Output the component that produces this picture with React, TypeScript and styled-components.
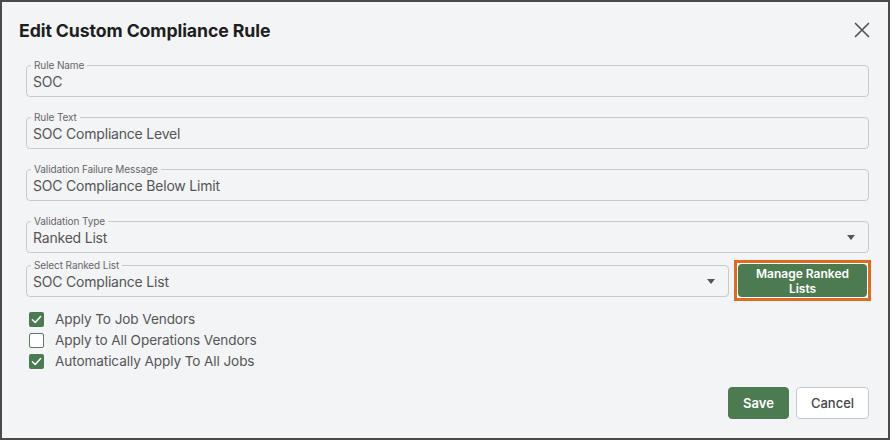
import React from 'react';
import styled, { createGlobalStyle } from 'styled-components';

const GlobalStyle = createGlobalStyle`
  html, body {
    margin: 0;
    padding: 0;
    background: #f3f4f6;
  }
  * {
    box-sizing: border-box;
  }
`;

const green = '#4c7a51';

const Dialog = styled.div`
  width: 890px;
  height: 440px;
  border: 2px solid #4a4a4a;
  background: #f3f4f6;
  font-family: Inter, 'Noto Sans', sans-serif;
  display: flex;
  flex-direction: column;
`;

const Header = styled.div`
  display: flex;
  align-items: center;
  justify-content: space-between;
  height: 54px;
  padding: 2px 16px 0 17px;
`;

const Title = styled.h2`
  margin: 0;
  font-size: 17.7px;
  font-weight: 700;
  color: #1e1e1e;
  letter-spacing: -0.1px;
`;

const CloseButton = styled.button`
  border: none;
  background: none;
  padding: 0;
  width: 20px;
  height: 20px;
  display: flex;
  align-items: center;
  justify-content: center;
  cursor: pointer;
  color: #555;
`;

const Body = styled.div`
  display: flex;
  flex-direction: column;
  padding: 9px 19px 0 24px;
`;

const Row = styled.div<{ $gap?: number }>`
  display: flex;
  align-items: center;
  gap: 5px;
  margin-top: ${(p) => p.$gap ?? 0}px;
`;

const Field = styled.div<{ $gap?: number; $grow?: boolean }>`
  position: relative;
  flex: ${(p) => (p.$grow ? '1 1 auto' : '0 0 auto')};
  height: 32px;
  border: 1px solid #c8c9cb;
  border-radius: 4px;
  margin-top: ${(p) => p.$gap ?? 0}px;
  display: flex;
  align-items: flex-end;
  padding: 0 6px 5px 6px;
`;

const Legend = styled.span`
  position: absolute;
  top: -7px;
  left: 4px;
  padding: 0 3px;
  background: #f3f4f6;
  font-size: 10px;
  line-height: 12px;
  color: #666;
  letter-spacing: -0.1px;
`;

const Value = styled.span`
  flex: 1;
  font-size: 14px;
  line-height: 18px;
  color: #555;
  letter-spacing: -0.2px;
`;

const Caret = styled.span`
  width: 0;
  height: 0;
  border-left: 4.5px solid transparent;
  border-right: 4.5px solid transparent;
  border-top: 5px solid #555;
  margin: 0 7px 7px 0;
`;

const FocusRing = styled.span`
  display: flex;
  border: 3px solid #e06a1f;
  padding: 1px;
  background: #fff;
  margin-right: -2px;
`;

const ManageButton = styled.button`
  width: 129px;
  height: 33px;
  border: none;
  border-radius: 4px;
  background: ${green};
  color: #fff;
  font-family: inherit;
  font-size: 12px;
  font-weight: 600;
  line-height: 15px;
  padding: 1px 12px 0;
  cursor: pointer;
`;

const Checks = styled.div`
  display: flex;
  flex-direction: column;
  gap: 6px;
  margin-top: 11px;
  padding-left: 3px;
`;

const CheckRow = styled.label`
  display: flex;
  align-items: center;
  gap: 11px;
  font-size: 13.6px;
  line-height: 15px;
  color: #555;
  letter-spacing: -0.1px;
`;

const Box = styled.span<{ $on: boolean }>`
  width: 15px;
  height: 15px;
  border-radius: 2px;
  background: ${(p) => (p.$on ? green : '#fff')};
  border: ${(p) => (p.$on ? 'none' : `1.5px solid #5d7a60`)};
  display: flex;
  align-items: center;
  justify-content: center;
`;

const Footer = styled.div`
  display: flex;
  justify-content: flex-end;
  gap: 7px;
  margin-top: 18px;
`;

const Button = styled.button<{ $primary?: boolean }>`
  height: 32px;
  width: ${(p) => (p.$primary ? 61 : 73)}px;
  padding: 0;
  border-radius: 4px;
  border: 1px solid ${(p) => (p.$primary ? green : '#c8c9cb')};
  background: ${(p) => (p.$primary ? green : '#fff')};
  color: ${(p) => (p.$primary ? '#fff' : '#444')};
  font-family: inherit;
  font-size: 13px;
  font-weight: ${(p) => (p.$primary ? 600 : 500)};
  cursor: pointer;
`;

const Check = () => (
  <svg width="11" height="11" viewBox="0 0 12 12" fill="none">
    <path d="M1.5 6.3 4.6 9.2 10.5 2.8" stroke="#fff" strokeWidth="1.6" strokeLinecap="round" strokeLinejoin="round" />
  </svg>
);

const fields = [
  { label: 'Rule Name', value: 'SOC' },
  { label: 'Rule Text', value: 'SOC Compliance Level' },
  { label: 'Validation Failure Message', value: 'SOC Compliance Below Limit' }
];

const options = [
  { label: 'Apply To Job Vendors', on: true },
  { label: 'Apply to All Operations Vendors', on: false },
  { label: 'Automatically Apply To All Jobs', on: true }
];

const App = () => {
  return (
    <>
      <GlobalStyle />
      <Dialog>
        <Header>
          <Title>Edit Custom Compliance Rule</Title>
          <CloseButton aria-label="Close">
            <svg width="16" height="16" viewBox="0 0 16 16" fill="none">
              <path d="M1.5 1.5 14.5 14.5M14.5 1.5 1.5 14.5" stroke="#555" strokeWidth="1.7" strokeLinecap="round" />
            </svg>
          </CloseButton>
        </Header>
        <Body>
          {fields.map((f, i) => (
            <Field key={f.label} $gap={i === 0 ? 0 : 20}>
              <Legend>{f.label}</Legend>
              <Value>{f.value}</Value>
            </Field>
          ))}
          <Field $gap={20}>
            <Legend>Validation Type</Legend>
            <Value>Ranked List</Value>
            <Caret />
          </Field>
          <Row $gap={7}>
            <Field $grow>
              <Legend>Select Ranked List</Legend>
              <Value>SOC Compliance List</Value>
              <Caret />
            </Field>
            <FocusRing>
              <ManageButton>Manage Ranked Lists</ManageButton>
            </FocusRing>
          </Row>
          <Checks>
            {options.map((o) => (
              <CheckRow key={o.label}>
                <Box $on={o.on}>{o.on && <Check />}</Box>
                {o.label}
              </CheckRow>
            ))}
          </Checks>
          <Footer>
            <Button $primary>Save</Button>
            <Button>Cancel</Button>
          </Footer>
        </Body>
      </Dialog>
    </>
  );
};

export default App;
